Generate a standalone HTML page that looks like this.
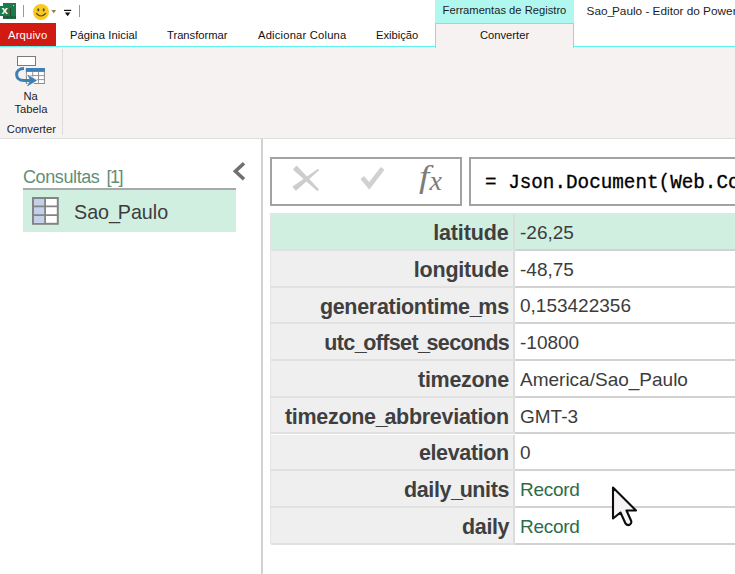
<!DOCTYPE html>
<html><head><meta charset="utf-8">
<style>
html,body{margin:0;padding:0;}
body{width:735px;height:574px;overflow:hidden;background:#fff;position:relative;font-family:"Liberation Sans",sans-serif;color:#222;}
.a{position:absolute;white-space:nowrap;}
.t{position:absolute;white-space:nowrap;line-height:1;transform-origin:0 0;}
.tab{font-size:11.2px;color:#111;top:29.5px;}
.lab{font-weight:bold;font-size:21.5px;color:#3f3f3f;}
.u{letter-spacing:-3.3px;}
.val{font-size:19px;color:#3c3c3c;left:520px;}
.row{position:absolute;left:271px;width:464px;}
.row .l{position:absolute;left:0;top:0;width:242px;height:100%;background:#efefef;}
.row .r{position:absolute;left:242px;top:0;width:2px;height:100%;background:#dcdcdc;}
.row .bl{position:absolute;left:0;top:100%;width:244px;height:2px;background:#e1e1e1;}
.row .br{position:absolute;left:244px;top:100%;width:220px;height:2px;background:#d2d2d2;}
</style></head><body>

<!-- title bar -->
<svg class="a" style="left:0;top:0" width="20" height="22" viewBox="0 0 20 22"><rect x="3" y="3" width="13" height="16" fill="#1f7a4a"/><rect x="0" y="6" width="10.4" height="10" fill="#1f7a4a"/><rect x="10.2" y="8" width="0.8" height="8.4" fill="#2b3b33"/><path d="M3.3 17.2H16" stroke="#2b3b33" stroke-width="2" stroke-dasharray="0.7 0.6" fill="none"/><rect x="13" y="5" width="1.1" height="1.1" fill="#7ff5f0"/><text x="1.6" y="14.4" font-family="Liberation Sans, sans-serif" font-weight="bold" font-size="11.5" fill="#fff">x</text></svg>
<div class="a" style="left:23px;top:5px;width:1px;height:12px;background:#9a9a9a;"></div>
<svg class="a" style="left:32px;top:3px" width="18" height="18" viewBox="0 0 18 18"><circle cx="9" cy="9" r="8" fill="#fbc81e"/><ellipse cx="6.3" cy="6.8" rx="1" ry="1.6" fill="#3f4c58"/><ellipse cx="11.7" cy="6.8" rx="1" ry="1.6" fill="#3f4c58"/><path d="M4.5 10.5 Q9 15.5 13.5 10.5" fill="none" stroke="#5d4a1e" stroke-width="1.2" stroke-linecap="round"/></svg>
<svg class="a" style="left:51px;top:10px" width="6" height="4"><path d="M0.2 0H5.2L2.7 3.2Z" fill="#85856a"/></svg>
<svg class="a" style="left:63px;top:9px" width="10" height="9"><rect x="1" y="0.8" width="7.2" height="1.2" fill="#111"/><path d="M1.8 3.6H7.4L4.6 7.2Z" fill="#111"/></svg>
<div class="a" style="left:79px;top:5px;width:1px;height:12px;background:#9a9a9a;"></div>

<!-- contextual tab header -->
<div class="a" style="left:435px;top:0;width:139px;height:23px;background:#b0f7f0;"></div>
<div class="t" id="ferr" style="left:442.6px;top:5px;font-size:11.2px;color:#1c1c1c;">Ferramentas de Registro</div>
<div class="t" id="title" style="left:586.6px;top:5.7px;font-size:11.8px;color:#1c1c1c;">Sao<span style="letter-spacing:-2.2px">_</span>Paulo - Editor do Power Query</div>

<!-- tabs -->
<div class="a" style="left:0;top:23px;width:56px;height:23px;background:#d01a12;"></div>
<div class="t tab" id="arq" style="left:8px;color:#fff;letter-spacing:0.2px;">Arquivo</div>
<div class="t tab" id="pag" style="left:70px;letter-spacing:0.05px;">Página Inicial</div>
<div class="t tab" id="tra" style="left:167px;">Transformar</div>
<div class="t tab" id="adi" style="left:258px;letter-spacing:0.2px;">Adicionar Coluna</div>
<div class="t tab" id="exi" style="left:376px;">Exibição</div>

<!-- ribbon -->
<div class="a" style="left:0;top:46px;width:735px;height:1px;background:#5df2ec;"></div>
<div class="a" style="left:0;top:47px;width:735px;height:91px;background:#f6f2f2;"></div>
<div class="a" style="left:0;top:138px;width:735px;height:1px;background:repeating-linear-gradient(90deg,#d6d6d6 0 1px,#e9e9e9 1px 2px);"></div>
<div class="a" style="left:435px;top:23px;width:136.5px;height:24px;background:#f6f2f2;border:1px solid #5df2ec;border-bottom:none;"></div>
<div class="t tab" id="conv" style="left:480px;">Converter</div>

<div class="a" style="left:62px;top:49px;width:1px;height:86px;background:#dedcdc;"></div>
<!-- Na Tabela icon -->
<svg class="a" style="left:14px;top:54px" width="34" height="34" viewBox="0 0 34 34">
<rect x="3.5" y="2.5" width="18" height="9" fill="#fff" stroke="#7a7a7a" stroke-width="1"/>
<rect x="12.4" y="14.5" width="18" height="15" fill="#fff" stroke="#8c8c8c" stroke-width="1"/>
<rect x="11.9" y="14" width="19" height="3.9" fill="#3f80b4"/>
<path d="M18.7 18V29.5M24.5 18V29.5M13 21.6H30.5M13 25.6H30.5" stroke="#8c8c8c" stroke-width="0.9" fill="none"/>
<path d="M10 14.6C5 14.6 2.6 17.4 2.6 20.6C2.6 24 5.4 26.6 10 26.6H18" fill="none" stroke="#3f80b4" stroke-width="3"/>
<path d="M13.8 21L22.6 26.4L13.4 32L16.6 26.5Z" fill="#f6f2f2" stroke="#f8f6f6" stroke-width="2.4" stroke-linejoin="round"/><path d="M11 26.6H18" stroke="#3f80b4" stroke-width="3" fill="none"/><path d="M13.8 21L22.6 26.4L13.4 32L16.6 26.5Z" fill="#3f80b4" stroke="#3f80b4" stroke-width="0.6" stroke-linejoin="round"/>
</svg>
<div class="t" id="na" style="left:23.4px;top:91px;font-size:11.2px;color:#1c1c1c;">Na</div>
<div class="t" id="tab" style="left:14.4px;top:104px;font-size:11.2px;color:#1c1c1c;">Tabela</div>
<div class="t" id="cgrp" style="left:6.8px;top:124px;font-size:11.2px;color:#1c1c1c;">Converter</div>

<!-- left panel -->
<div class="t" id="cons" style="left:23px;top:168.1px;font-size:18px;letter-spacing:-0.4px;word-spacing:2.5px;color:#5f8f76;">Consultas <span style="letter-spacing:-1.5px">[1]</span></div>
<svg class="a" style="left:232px;top:161px" width="14" height="20" viewBox="0 0 14 20"><path d="M12 2.2L3.4 10.2L12 18.2" fill="none" stroke="#6e716d" stroke-width="3.6"/></svg>
<div class="a" style="left:23px;top:188px;width:213px;height:2px;background:#a8a8a8;"></div>
<div class="a" style="left:23px;top:190px;width:213px;height:41.6px;background:#d1efe0;"></div>
<svg class="a" style="left:32px;top:197px" width="28" height="29" viewBox="0 0 28 29">
<rect x="1" y="1" width="24.8" height="25.8" fill="#fff" stroke="#848484" stroke-width="2"/>
<rect x="2" y="2" width="11" height="23.8" fill="#c3d1ea"/>
<path d="M13.1 1V27M1 9.4H26M1 18.2H26" stroke="#848484" stroke-width="1.8" fill="none"/>
</svg>
<div class="t" id="sp" style="left:73.8px;top:201px;font-size:21px;color:#3c3c3c;transform:scaleX(0.938);">Sao<span style="letter-spacing:-2.4px">_</span>Paulo</div>

<div class="a" style="left:261px;top:139px;width:2px;height:435px;background:#d2d2d2;"></div>

<!-- formula bar -->
<div class="a" style="left:270px;top:157px;width:188px;height:44.6px;border:2px solid #a2a2a2;background:#fff;"></div>
<div class="a" style="left:469px;top:157px;width:280px;height:44.6px;border:2px solid #a2a2a2;background:#fff;"></div>
<svg class="a" style="left:280px;top:155px" width="120" height="50" viewBox="280 155 120 50"><path d="M293.81 169.44L296.59 166.56L318.15 189.54L317.45 190.26Z" fill="#cdcdcd" stroke="#cdcdcd" stroke-width="1.4" stroke-linejoin="round"/><path d="M295.78 189.89L293.42 186.91L318.08 169.64L318.32 169.96Z" fill="#cdcdcd" stroke="#cdcdcd" stroke-width="1.4" stroke-linejoin="round"/><path d="M362.3 177.6L369.2 186L382.6 168.4" stroke="#d1d1d1" stroke-width="4.8" fill="none"/></svg>
<div class="t" id="fx" style="left:418.6px;top:161px;font-family:'Liberation Serif',serif;font-style:italic;font-size:31px;color:#7a7d7d;transform:scaleX(1.2);">f</div>
<div class="t" id="fx2" style="left:429.5px;top:167.3px;font-family:'Liberation Serif',serif;font-style:italic;font-size:28px;color:#7a7d7d;">x</div>
<div class="t" id="formula" style="left:485px;top:173.8px;font-family:'Liberation Mono',monospace;font-size:19.3px;color:#000;-webkit-text-stroke:0.3px #000;">= Json.Document(Web.Contents(</div>

<!-- table -->
<div class="a" style="left:270px;top:213px;width:465px;height:1px;background:#e4e4e4;"></div>
<div class="a" style="left:270px;top:213px;width:1px;height:331px;background:#e4e4e4;"></div>
<div class="row" style="top:214.0px;height:35.0px;background:#d1efe0;"><div class="r"></div><div class="bl"></div><div class="br"></div></div>
<div class="row" style="top:251.0px;height:34.7px;"><div class="l"></div><div class="r"></div><div class="bl"></div><div class="br"></div></div>
<div class="row" style="top:287.7px;height:34.7px;"><div class="l"></div><div class="r"></div><div class="bl"></div><div class="br"></div></div>
<div class="row" style="top:324.4px;height:34.7px;"><div class="l"></div><div class="r"></div><div class="bl"></div><div class="br"></div></div>
<div class="row" style="top:361.1px;height:34.7px;"><div class="l"></div><div class="r"></div><div class="bl"></div><div class="br"></div></div>
<div class="row" style="top:397.8px;height:34.7px;"><div class="l"></div><div class="r"></div><div class="bl"></div><div class="br"></div></div>
<div class="row" style="top:434.5px;height:34.7px;"><div class="l"></div><div class="r"></div><div class="bl"></div><div class="br"></div></div>
<div class="row" style="top:471.2px;height:34.7px;"><div class="l"></div><div class="r"></div><div class="bl"></div><div class="br"></div></div>
<div class="row" style="top:507.9px;height:34.7px;"><div class="l"></div><div class="r"></div><div class="bl"></div><div class="br"></div></div>
<div class="t lab" id="l1" style="right:226.38px;top:223.2px;letter-spacing:-0.12px;">latitude</div>
<div class="t lab" id="l2" style="right:226.30px;top:259.9px;letter-spacing:-0.2px;">longitude</div>
<div class="t lab" id="l3" style="right:226.19px;top:296.6px;letter-spacing:-0.31px;">generationtime<span class="u">_</span>ms</div>
<div class="t lab" id="l4" style="right:225.84px;top:333.3px;letter-spacing:-0.66px;">utc<span class="u">_</span>offset<span class="u">_</span>seconds</div>
<div class="t lab" id="l5" style="right:226.19px;top:370.0px;letter-spacing:-0.31px;">timezone</div>
<div class="t lab" id="l6" style="right:226.21px;top:406.7px;letter-spacing:-0.29px;">timezone<span class="u">_</span>abbreviation</div>
<div class="t lab" id="l7" style="right:226.14px;top:443.4px;letter-spacing:-0.36px;">elevation</div>
<div class="t lab" id="l8" style="right:226.08px;top:480.1px;letter-spacing:-0.42px;">daily<span class="u">_</span>units</div>
<div class="t lab" id="l9" style="right:225.90px;top:516.8px;letter-spacing:-0.4px;">daily</div>
<div class="t val" id="v1" style="top:223.0px;">-26,25</div>
<div class="t val" id="v2" style="top:259.7px;">-48,75</div>
<div class="t val" id="v3" style="top:296.4px;">0,153422356</div>
<div class="t val" id="v4" style="top:333.1px;">-10800</div>
<div class="t val" id="v5" style="top:369.8px;">America/Sao_Paulo</div>
<div class="t val" id="v6" style="top:406.5px;">GMT-3</div>
<div class="t val" id="v7" style="top:443.2px;">0</div>
<div class="t val" id="v8" style="top:479.9px; color:#2e6b48;letter-spacing:-0.3px;">Record</div>
<div class="t val" id="v9" style="top:516.6px; color:#2e6b48;letter-spacing:-0.3px;">Record</div>

<!-- cursor -->
<svg class="a" style="left:608px;top:483px" width="34" height="46" viewBox="0 0 34 46"><path d="M5 4.5V35.5L12.5 29.5L17.5 40.5Q19.5 43 22 41.5Q24 40 23 37.5L18.5 27.5H28Z" fill="#f6f4f4" stroke="#0c0c0c" stroke-width="2.1" stroke-linejoin="round"/></svg>

</body></html>
